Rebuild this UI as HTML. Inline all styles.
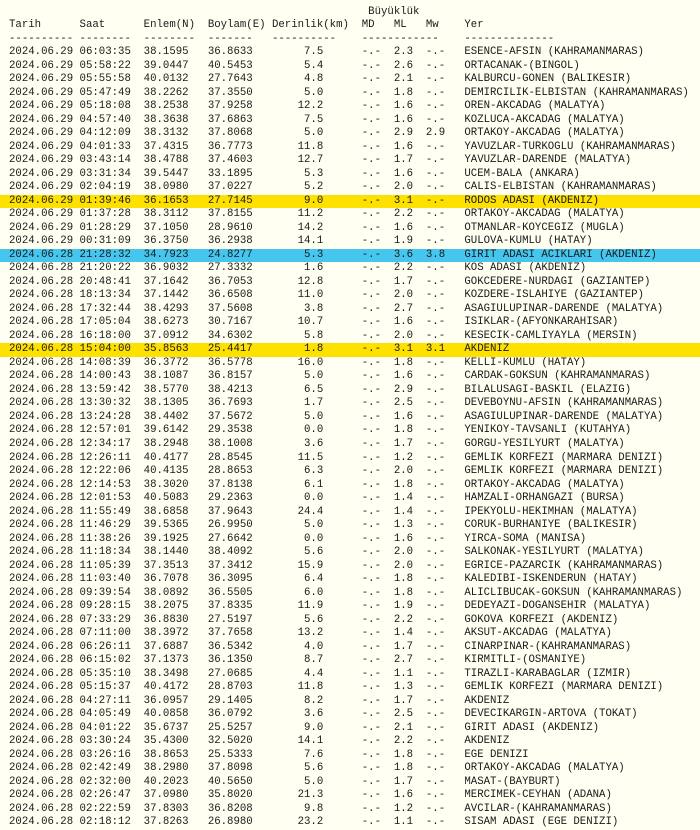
<!DOCTYPE html>
<html><head><meta charset="utf-8"><style>
html,body{margin:0;padding:0;background:#fffff2;width:700px;height:829px;overflow:hidden}
#w{position:absolute;left:9px;top:5.5px;font-family:"Liberation Mono",monospace;font-size:10.7px;color:#1a1a1a}
#w div{height:13.53px;line-height:13.53px;white-space:pre}
#w .y{background:#ffe100;margin-left:-9px;padding-left:9px;width:700px}
#w .b{background:#45c6ef;margin-left:-9px;padding-left:9px;width:700px}
</style></head><body><div id="w">
<div>                                                        Büyüklük</div>
<div>Tarih      Saat      Enlem(N)  Boylam(E) Derinlik(km)  MD   ML   Mw    Yer</div>
<div>---------- --------  --------  -------   ----------    ------------    --------------</div>
<div>2024.06.29 06:03:35  38.1595   36.8633        7.5      -.-  2.3  -.-   ESENCE-AFSIN (KAHRAMANMARAS)</div>
<div>2024.06.29 05:58:22  39.0447   40.5453        5.4      -.-  2.6  -.-   ORTACANAK-(BINGOL)</div>
<div>2024.06.29 05:55:58  40.0132   27.7643        4.8      -.-  2.1  -.-   KALBURCU-GONEN (BALIKESIR)</div>
<div>2024.06.29 05:47:49  38.2262   37.3550        5.0      -.-  1.8  -.-   DEMIRCILIK-ELBISTAN (KAHRAMANMARAS)</div>
<div>2024.06.29 05:18:08  38.2538   37.9258       12.2      -.-  1.6  -.-   OREN-AKCADAG (MALATYA)</div>
<div>2024.06.29 04:57:40  38.3638   37.6863        7.5      -.-  1.6  -.-   KOZLUCA-AKCADAG (MALATYA)</div>
<div>2024.06.29 04:12:09  38.3132   37.8068        5.0      -.-  2.9  2.9   ORTAKOY-AKCADAG (MALATYA)</div>
<div>2024.06.29 04:01:33  37.4315   36.7773       11.8      -.-  1.6  -.-   YAVUZLAR-TURKOGLU (KAHRAMANMARAS)</div>
<div>2024.06.29 03:43:14  38.4788   37.4603       12.7      -.-  1.7  -.-   YAVUZLAR-DARENDE (MALATYA)</div>
<div>2024.06.29 03:31:34  39.5447   33.1895        5.3      -.-  1.6  -.-   UCEM-BALA (ANKARA)</div>
<div>2024.06.29 02:04:19  38.0980   37.0227        5.2      -.-  2.0  -.-   CALIS-ELBISTAN (KAHRAMANMARAS)</div>
<div class="y">2024.06.29 01:39:46  36.1653   27.7145        9.0      -.-  3.1  -.-   RODOS ADASI (AKDENIZ)</div>
<div>2024.06.29 01:37:28  38.3112   37.8155       11.2      -.-  2.2  -.-   ORTAKOY-AKCADAG (MALATYA)</div>
<div>2024.06.29 01:28:29  37.1050   28.9610       14.2      -.-  1.6  -.-   OTMANLAR-KOYCEGIZ (MUGLA)</div>
<div>2024.06.29 00:31:09  36.3750   36.2938       14.1      -.-  1.9  -.-   GULOVA-KUMLU (HATAY)</div>
<div class="b">2024.06.28 21:28:32  34.7923   24.8277        5.3      -.-  3.6  3.8   GIRIT ADASI ACIKLARI (AKDENIZ)</div>
<div>2024.06.28 21:20:22  36.9032   27.3332        1.6      -.-  2.2  -.-   KOS ADASI (AKDENIZ)</div>
<div>2024.06.28 20:48:41  37.1642   36.7053       12.8      -.-  1.7  -.-   GOKCEDERE-NURDAGI (GAZIANTEP)</div>
<div>2024.06.28 18:13:34  37.1442   36.6508       11.0      -.-  2.0  -.-   KOZDERE-ISLAHIYE (GAZIANTEP)</div>
<div>2024.06.28 17:32:44  38.4293   37.5608        3.8      -.-  2.7  -.-   ASAGIULUPINAR-DARENDE (MALATYA)</div>
<div>2024.06.28 17:05:04  38.6273   30.7167       10.7      -.-  1.6  -.-   ISIKLAR-(AFYONKARAHISAR)</div>
<div>2024.06.28 16:18:00  37.0912   34.6302        5.8      -.-  2.0  -.-   KESECIK-CAMLIYAYLA (MERSIN)</div>
<div class="y">2024.06.28 15:04:00  35.8563   25.4417        1.8      -.-  3.1  3.1   AKDENIZ</div>
<div>2024.06.28 14:08:39  36.3772   36.5778       16.0      -.-  1.8  -.-   KELLI-KUMLU (HATAY)</div>
<div>2024.06.28 14:00:43  38.1087   36.8157        5.0      -.-  1.6  -.-   CARDAK-GOKSUN (KAHRAMANMARAS)</div>
<div>2024.06.28 13:59:42  38.5770   38.4213        6.5      -.-  2.9  -.-   BILALUSAGI-BASKIL (ELAZIG)</div>
<div>2024.06.28 13:30:32  38.1305   36.7693        1.7      -.-  2.5  -.-   DEVEBOYNU-AFSIN (KAHRAMANMARAS)</div>
<div>2024.06.28 13:24:28  38.4402   37.5672        5.0      -.-  1.6  -.-   ASAGIULUPINAR-DARENDE (MALATYA)</div>
<div>2024.06.28 12:57:01  39.6142   29.3538        0.0      -.-  1.8  -.-   YENIKOY-TAVSANLI (KUTAHYA)</div>
<div>2024.06.28 12:34:17  38.2948   38.1008        3.6      -.-  1.7  -.-   GORGU-YESILYURT (MALATYA)</div>
<div>2024.06.28 12:26:11  40.4177   28.8545       11.5      -.-  1.2  -.-   GEMLIK KORFEZI (MARMARA DENIZI)</div>
<div>2024.06.28 12:22:06  40.4135   28.8653        6.3      -.-  2.0  -.-   GEMLIK KORFEZI (MARMARA DENIZI)</div>
<div>2024.06.28 12:14:53  38.3020   37.8138        6.1      -.-  1.8  -.-   ORTAKOY-AKCADAG (MALATYA)</div>
<div>2024.06.28 12:01:53  40.5083   29.2363        0.0      -.-  1.4  -.-   HAMZALI-ORHANGAZI (BURSA)</div>
<div>2024.06.28 11:55:49  38.6858   37.9643       24.4      -.-  1.4  -.-   IPEKYOLU-HEKIMHAN (MALATYA)</div>
<div>2024.06.28 11:46:29  39.5365   26.9950        5.0      -.-  1.3  -.-   CORUK-BURHANIYE (BALIKESIR)</div>
<div>2024.06.28 11:38:26  39.1925   27.6642        0.0      -.-  1.6  -.-   YIRCA-SOMA (MANISA)</div>
<div>2024.06.28 11:18:34  38.1440   38.4092        5.6      -.-  2.0  -.-   SALKONAK-YESILYURT (MALATYA)</div>
<div>2024.06.28 11:05:39  37.3513   37.3412       15.9      -.-  2.0  -.-   EGRICE-PAZARCIK (KAHRAMANMARAS)</div>
<div>2024.06.28 11:03:40  36.7078   36.3095        6.4      -.-  1.8  -.-   KALEDIBI-ISKENDERUN (HATAY)</div>
<div>2024.06.28 09:39:54  38.0892   36.5505        6.0      -.-  1.8  -.-   ALICLIBUCAK-GOKSUN (KAHRAMANMARAS)</div>
<div>2024.06.28 09:28:15  38.2075   37.8335       11.9      -.-  1.9  -.-   DEDEYAZI-DOGANSEHIR (MALATYA)</div>
<div>2024.06.28 07:33:29  36.8830   27.5197        5.6      -.-  2.2  -.-   GOKOVA KORFEZI (AKDENIZ)</div>
<div>2024.06.28 07:11:00  38.3972   37.7658       13.2      -.-  1.4  -.-   AKSUT-AKCADAG (MALATYA)</div>
<div>2024.06.28 06:26:11  37.6887   36.5342        4.0      -.-  1.7  -.-   CINARPINAR-(KAHRAMANMARAS)</div>
<div>2024.06.28 06:15:02  37.1373   36.1350        8.7      -.-  2.7  -.-   KIRMITLI-(OSMANIYE)</div>
<div>2024.06.28 05:35:10  38.3498   27.0685        4.4      -.-  1.1  -.-   TIRAZLI-KARABAGLAR (IZMIR)</div>
<div>2024.06.28 05:15:37  40.4172   28.8703       11.8      -.-  1.3  -.-   GEMLIK KORFEZI (MARMARA DENIZI)</div>
<div>2024.06.28 04:27:11  36.0957   29.1405        8.2      -.-  1.7  -.-   AKDENIZ</div>
<div>2024.06.28 04:05:49  40.0858   36.0792        3.6      -.-  2.5  -.-   DEVECIKARGIN-ARTOVA (TOKAT)</div>
<div>2024.06.28 04:01:22  35.6737   25.5257        9.0      -.-  2.1  -.-   GIRIT ADASI (AKDENIZ)</div>
<div>2024.06.28 03:30:24  35.4300   32.5020       14.1      -.-  2.2  -.-   AKDENIZ</div>
<div>2024.06.28 03:26:16  38.8653   25.5333        7.6      -.-  1.8  -.-   EGE DENIZI</div>
<div>2024.06.28 02:42:49  38.2980   37.8098        5.6      -.-  1.8  -.-   ORTAKOY-AKCADAG (MALATYA)</div>
<div>2024.06.28 02:32:00  40.2023   40.5650        5.0      -.-  1.7  -.-   MASAT-(BAYBURT)</div>
<div>2024.06.28 02:26:47  37.0980   35.8020       21.3      -.-  1.6  -.-   MERCIMEK-CEYHAN (ADANA)</div>
<div>2024.06.28 02:22:59  37.8303   36.8208        9.8      -.-  1.2  -.-   AVCILAR-(KAHRAMANMARAS)</div>
<div>2024.06.28 02:18:12  37.8263   26.8980       23.2      -.-  1.1  -.-   SISAM ADASI (EGE DENIZI)</div>
</div></body></html>
